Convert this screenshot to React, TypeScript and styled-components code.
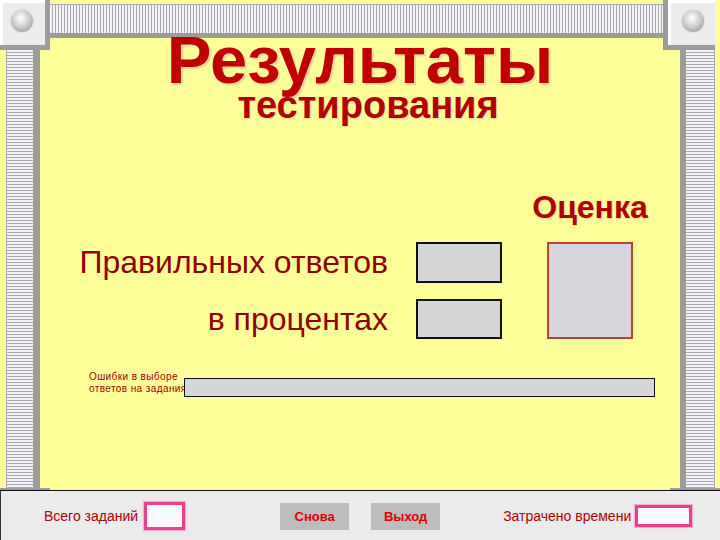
import React from 'react';
import styled, { createGlobalStyle } from 'styled-components';

const GlobalStyle = createGlobalStyle`
  html, body {
    margin: 0;
    padding: 0;
  }
  body {
    width: 720px;
    height: 540px;
    overflow: hidden;
    font-family: "Liberation Sans", Arial, sans-serif;
    background: #ffff99;
  }
`;

const Page = styled.div`
  width: 720px;
  height: 540px;
  display: flex;
  flex-direction: column;
`;

const Stage = styled.div`
  height: 490px;
  display: flex;
  background: #ffff99;
`;

const Rail = styled.div<{ $side: 'left' | 'right' }>`
  width: 50px;
  display: flex;
  flex-direction: column;
  align-items: ${p => (p.$side === 'left' ? 'flex-start' : 'flex-end')};
`;

const Corner = styled.div<{ $side: 'left' | 'right' }>`
  width: ${p => (p.$side === 'left' ? 50 : 52)}px;
  height: 50px;
  box-sizing: border-box;
  background: #ececec;
  border: 5px solid #9c9c9c;
  border-top: none;
  border-${p => (p.$side === 'left' ? 'left' : 'right')}: none;
  ${p => (p.$side === 'right' ? 'margin-right: 5px;' : '')}
  box-shadow: inset 3px 3px 0 #ffffff;
  display: flex;
  align-items: center;
  justify-content: center;
  padding-${p => (p.$side === 'left' ? 'right' : 'left')}: 2px;
`;

const Knob = styled.div`
  width: 22px;
  height: 22px;
  border-radius: 50%;
  margin-bottom: 4px;
  background: radial-gradient(circle at 45% 38%, #ffffff 0%, #cfcfcf 45%, #8a8a8a 100%);
  box-shadow: 0 0 2px #bdbdbd;
`;

const SideBar = styled.div<{ $side: 'left' | 'right' }>`
  flex: 1;
  width: ${p => (p.$side === 'left' ? 26 : 28)}px;
  margin: ${p => (p.$side === 'left' ? '0 0 0 6px' : '0 5px 0 0')};
  border-left: 1px solid #a8a8a8;
  border-right: 1px solid #a8a8a8;
  ${p =>
    p.$side === 'left'
      ? 'border-right: 7px solid #9c9c9c;'
      : 'border-left: 6px solid #9c9c9c;'}
  background: repeating-linear-gradient(180deg, #f4f4f4 0 2px, #a8a8b4 2px 3px);
`;

const RailFoot = styled.div`
  align-self: stretch;
  height: 2px;
  background: #9c9c9c;
`;

const Middle = styled.div`
  flex: 1;
  display: flex;
  flex-direction: column;
`;

const TopBar = styled.div`
  height: 28px;
  margin-top: 4px;
  border-top: 1px solid #a8a8a8;
  border-bottom: 5px solid #9c9c9c;
  background: repeating-linear-gradient(90deg, #f4f4f4 0 2px, #a8a8b4 2px 3px);
`;

const Title = styled.h1`
  margin: 0;
  font-size: 67px;
  line-height: 44px;
  font-weight: bold;
  text-align: center;
  color: #c00000;
  text-shadow: 2px 2px 1px #e8d8a0;
  white-space: nowrap;
`;

const Subtitle = styled.h2`
  margin: 0;
  padding-left: 16px;
  font-size: 38px;
  line-height: 46px;
  font-weight: bold;
  text-align: center;
  color: #b00000;
  text-shadow: 1px 1px 1px #e8d8a0;
`;

const Results = styled.div`
  margin-top: 64px;
  display: grid;
  grid-template-columns: 366px 131px 86px;
  grid-template-rows: 34px 41px 40px;
  row-gap: 16px;
`;

const GradeHead = styled.div`
  grid-column: 3;
  grid-row: 1;
  display: flex;
  justify-content: center;
  font-size: 32px;
  line-height: 30px;
  font-weight: bold;
  color: #b00000;
  text-shadow: 1px 1px 1px #e8d8a0;
  white-space: nowrap;
`;

const RowLabel = styled.div<{ $row: number }>`
  grid-column: 1;
  grid-row: ${p => p.$row};
  align-self: center;
  justify-self: end;
  padding-right: 28px;
  font-size: 32px;
  color: #900000;
  white-space: nowrap;
`;

const ValueBox = styled.div<{ $row: number }>`
  grid-column: 2;
  grid-row: ${p => p.$row};
  width: 86px;
  box-sizing: border-box;
  background: #d6d6d6;
  border: 2px solid #111;
`;

const GradeBox = styled.div`
  grid-column: 3;
  grid-row: 2 / span 2;
  box-sizing: border-box;
  background: #d6d6dc;
  border: 2px solid #c04030;
`;

const ErrorsRow = styled.div`
  margin-top: 32px;
  padding-left: 39px;
  padding-right: 15px;
  display: flex;
  align-items: flex-start;
`;

const ErrorsLabel = styled.div`
  width: 95px;
  font-size: 10px;
  line-height: 12px;
  letter-spacing: 0.4px;
  color: #a00000;
  white-space: nowrap;
`;

const ErrorsBar = styled.div`
  flex: 1;
  height: 19px;
  margin-top: 7px;
  box-sizing: border-box;
  background: #d6d6d6;
  border: 1px solid #111;
`;

const Footer = styled.div`
  height: 50px;
  box-sizing: border-box;
  border-top: 1px solid #111;
  border-left: 1px solid #333;
  background: #ebebeb;
  display: flex;
  align-items: center;
  padding-left: 43px;
  padding-top: 1px;
`;

const FooterText = styled.span<{ $gap?: number }>`
  font-size: 14px;
  color: #b00000;
  margin-left: ${p => p.$gap ?? 0}px;
  white-space: nowrap;
`;

const PinkField = styled.div<{ $w: number; $h: number; $gap: number }>`
  width: ${p => p.$w}px;
  height: ${p => p.$h}px;
  margin-left: ${p => p.$gap}px;
  box-sizing: border-box;
  background: #f8f8ff;
  border: 3px solid #e8408c;
  box-shadow: 0 0 1px 1px #f7b0d0;
`;

const Button = styled.button<{ $gap: number }>`
  width: 69px;
  height: 27px;
  margin-left: ${p => p.$gap}px;
  padding: 0;
  border: none;
  background: #bdbdbd;
  color: #e00000;
  font-family: "Liberation Sans", Arial, sans-serif;
  font-size: 13px;
  font-weight: bold;
`;

const App = (): JSX.Element => {
  return (
    <Page>
      <GlobalStyle />
      <Stage>
        <Rail $side="left">
          <Corner $side="left"><Knob /></Corner>
          <SideBar $side="left" />
          <RailFoot />
        </Rail>
        <Middle>
          <TopBar />
          <Title>Результаты</Title>
          <Subtitle>тестирования</Subtitle>
          <Results>
            <GradeHead>Оценка</GradeHead>
            <RowLabel $row={2}>Правильных ответов</RowLabel>
            <ValueBox $row={2} />
            <RowLabel $row={3}>в процентах</RowLabel>
            <ValueBox $row={3} />
            <GradeBox />
          </Results>
          <ErrorsRow>
            <ErrorsLabel>
              Ошибки в выборе
              <br />
              ответов на задания:
            </ErrorsLabel>
            <ErrorsBar />
          </ErrorsRow>
        </Middle>
        <Rail $side="right">
          <Corner $side="right"><Knob /></Corner>
          <SideBar $side="right" />
          <RailFoot />
        </Rail>
      </Stage>
      <Footer>
        <FooterText>Всего заданий</FooterText>
        <PinkField $w={41} $h={28} $gap={6} />
        <Button $gap={95}>Снова</Button>
        <Button $gap={22}>Выход</Button>
        <FooterText $gap={63}>Затрачено времени</FooterText>
        <PinkField $w={57} $h={22} $gap={4} />
      </Footer>
    </Page>
  );
};

export default App;
